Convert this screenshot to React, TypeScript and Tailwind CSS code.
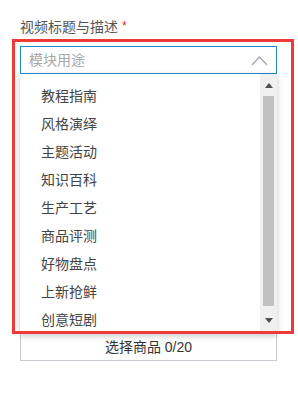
const options = ['教程指南', '风格演绎', '主题活动', '知识百科', '生产工艺', '商品评测', '好物盘点', '上新抢鲜', '创意短剧'];

export default function App() {
  return (
    <div className="relative w-[298px] h-[400px] bg-white font-['Liberation_Sans','Noto_Sans_CJK_SC',sans-serif] text-[14px]">
      <div className="px-5 pt-[19px]">
        <div className="flex items-center gap-1 h-[17px] text-[#555]">
          <span>视频标题与描述</span>
          <span className="text-[#f5222d] text-[12px] -mt-1">*</span>
        </div>

        <div className="relative mt-[10px]">
          <div className="flex items-center justify-between h-[28px] w-[257px] border border-[#1e88d0] pl-2 pr-[8px]">
            <span className="text-[#a8a8a8]">模块用途</span>
            <svg width="17" height="11" viewBox="0 0 17 11" className="mt-[1px]">
              <polyline points="1,10 8.5,2 16,10" fill="none" stroke="#a8a8b8" strokeWidth="1.4" />
            </svg>
          </div>

          <div className="absolute left-0 top-[28px] z-10 flex w-[257px] h-[260px] bg-white shadow-[0_2px_6px_rgba(0,0,0,0.22)]">
            <ul className="flex-1 pt-[8px] pl-[21px] text-[#444]">
              {options.map(o => (
                <li key={o} className="h-[28px] leading-[28px]">{o}</li>
              ))}
            </ul>
            <div className="flex flex-col w-[17px] bg-[#f0f0f0]">
              <div className="h-[22px] flex items-center justify-center">
                <svg width="8" height="5" viewBox="0 0 8 5"><path d="M0 5 L4 0 L8 5 Z" fill="#505050" /></svg>
              </div>
              <div className="mx-[3px] h-[210px] bg-[#c1c1c1]" />
              <div className="flex-1 flex items-center justify-center">
                <svg width="8" height="5" viewBox="0 0 8 5"><path d="M0 0 L4 5 L8 0 Z" fill="#505050" /></svg>
              </div>
            </div>
          </div>
        </div>

        <div className="mt-[259px] flex items-center justify-center h-[28px] w-[257px] border border-[#c8c8d0] text-[#333]">
          选择商品 0/20
        </div>
      </div>

      <div className="absolute left-[12px] top-[39px] z-20 w-[282px] h-[295px] border-[3px] border-[#f03a3a] pointer-events-none" />
    </div>
  );
}
